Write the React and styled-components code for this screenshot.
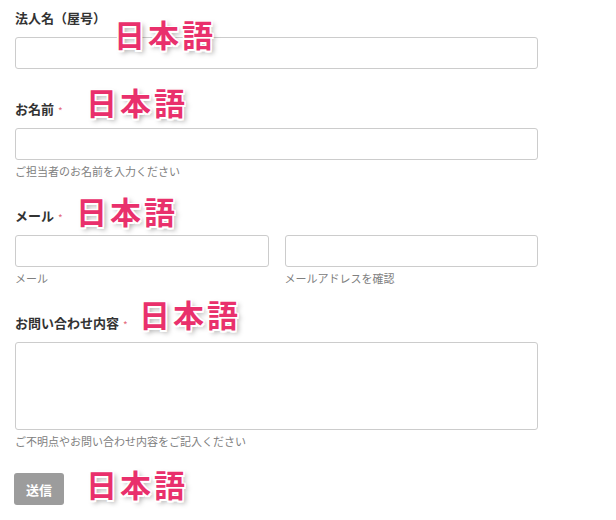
import React from "react";
import styled, { createGlobalStyle } from "styled-components";

const Global = createGlobalStyle`
  html, body { margin: 0; padding: 0; background: #fff; }
  body { font-family: "Noto Sans CJK JP", "Noto Sans", sans-serif; }
  * { box-sizing: border-box; }
`;

const Page = styled.div`
  position: relative;
  width: 616px;
  height: 520px;
  padding: 8px 78px 0 15px;
`;

const Field = styled.div`
  display: flex;
  flex-direction: column;
  margin-bottom: ${(p) => p.$gap}px;
`;

const Label = styled.div`
  font-size: 13px;
  line-height: 20px;
  font-weight: 700;
  color: #333;
  margin-bottom: 9px;
  display: flex;
  align-items: center;
`;

const Req = styled.span`
  color: #e46a7a;
  font-size: 10px;
  font-weight: 400;
  margin-left: 4px;
  position: relative;
  top: 2px;
`;

const Input = styled.div`
  height: 32px;
  border: 1px solid #cccccc;
  border-radius: 3px;
  background: #fff;
`;

const TextArea = styled(Input)`
  height: 88px;
`;

const Help = styled.div`
  font-size: 11px;
  line-height: 16px;
  color: #808080;
  margin-top: 3px;
`;

const Pair = styled.div`
  display: grid;
  grid-template-columns: 1fr 1fr;
  column-gap: 16px;
`;

const Col = styled.div`
  display: flex;
  flex-direction: column;
`;

const Button = styled.div`
  width: 50px;
  height: 32px;
  margin-left: -1px;
  border-radius: 3px;
  background: #9c9c9c;
  color: #fff;
  font-size: 13px;
  font-weight: 700;
  display: flex;
  align-items: center;
  justify-content: center;
`;

const Note = styled.div`
  position: absolute;
  left: ${(p) => p.$x}px;
  top: ${(p) => p.$y}px;
  font-family: "Noto Sans CJK JP", sans-serif;
  font-size: 31px;
  line-height: 31px;
  font-weight: 700;
  letter-spacing: 3px;
  color: #e9306c;
  white-space: nowrap;
  text-shadow:
    1.5px 0 0 #fff, -1.5px 0 0 #fff, 0 1.5px 0 #fff, 0 -1.5px 0 #fff,
    1.5px 1.5px 0 #fff, -1.5px -1.5px 0 #fff, 1.5px -1.5px 0 #fff, -1.5px 1.5px 0 #fff,
    3px 3px 5px rgba(0, 0, 0, 0.35);
`;

const notes = [
  { x: 114, y: 18 },
  { x: 86, y: 86 },
  { x: 76, y: 195 },
  { x: 139, y: 298 },
  { x: 86, y: 468 },
];

export default function App() {
  return (
    <>
      <Global />
      <Page>
        <Field $gap={30}>
          <Label>法人名（屋号）</Label>
          <Input />
        </Field>
        <Field $gap={27}>
          <Label>
            お名前<Req>*</Req>
          </Label>
          <Input />
          <Help>ご担当者のお名前を入力ください</Help>
        </Field>
        <Field $gap={27}>
          <Label>
            メール<Req>*</Req>
          </Label>
          <Pair>
            <Col>
              <Input />
              <Help>メール</Help>
            </Col>
            <Col>
              <Input />
              <Help>メールアドレスを確認</Help>
            </Col>
          </Pair>
        </Field>
        <Field $gap={24}>
          <Label>
            お問い合わせ内容<Req>*</Req>
          </Label>
          <TextArea />
          <Help>ご不明点やお問い合わせ内容をご記入ください</Help>
        </Field>
        <Button>送信</Button>
        {notes.map((n, i) => (
          <Note key={i} $x={n.x} $y={n.y}>
            日本語
          </Note>
        ))}
      </Page>
    </>
  );
}
